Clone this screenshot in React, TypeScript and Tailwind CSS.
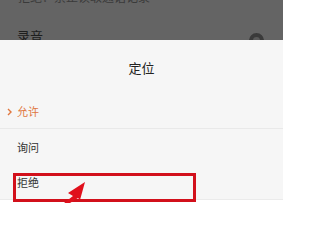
import React from "react";

export default function App() {
  const cjk = { fontFamily: '"Noto Sans CJK SC", "Noto Sans", sans-serif' };
  return (
    <div className="relative w-[283px] h-[218px] overflow-hidden bg-white" style={cjk}>
      {/* dimmed background */}
      <div className="h-[40px] bg-[#646464] overflow-hidden flex justify-between pl-[17px] pr-[19px]">
        <div className="flex flex-col -mt-[10px]">
          <div className="pl-[1px] text-[12px] leading-[14px] text-[#3a3a3a]">拒绝：禁止读取通话记录</div>
          <div className="mt-[24px] text-[13px] leading-[16px] text-[#1e1e1e]">录音</div>
        </div>
        <div className="self-end -mb-[8px] w-[15px] h-[15px] shrink-0 rounded-full border-[4px] border-[#3a3a3a] bg-[#5a5a5a]" />
      </div>
      {/* sheet */}
      <div className="flex flex-col bg-[#f6f6f6] h-[160px]">
        <div className="h-[55px] flex items-center justify-center text-[13px] text-[#222]">定位</div>
        <div className="h-[34px] flex items-center gap-[5px] pl-[7px] border-b border-[#e9e9e9] text-[11px] text-[#e0773f]">
          <svg width="5" height="8" viewBox="0 0 5 8">
            <path d="M1 1 L4 4 L1 7" fill="none" stroke="#e0773f" strokeWidth="1.4" />
          </svg>
          允许
        </div>
        <div className="h-[36px] flex items-center pl-[17px] text-[11px] text-[#333]">询问</div>
        <div className="h-[35px] flex items-center pl-[17px] text-[11px] text-[#333] border-b border-[#ebebeb]">拒绝</div>
      </div>
      {/* annotation: red box and arrow */}
      <div className="absolute left-[13px] top-[173px] w-[183px] h-[29px] border-[3px] border-[#d2101b]" />
      <svg className="absolute left-0 top-0 pointer-events-none" width="283" height="218" viewBox="0 0 283 218">
        <polygon points="85,182 68,193 73,196 64,203 70,203 78,198 80,200" fill="#e0101c" />
      </svg>
    </div>
  );
}
